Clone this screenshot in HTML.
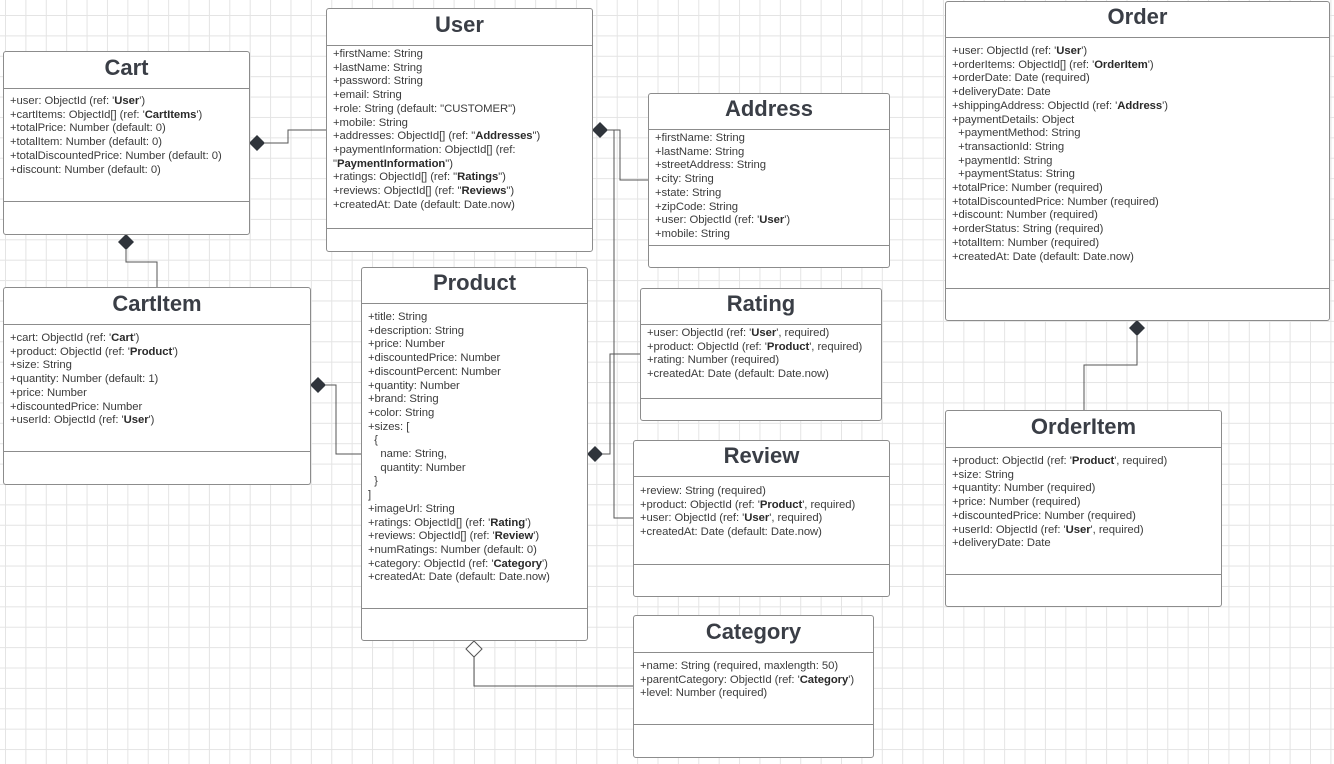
<!DOCTYPE html>
<html><head><meta charset="utf-8"><style>
html,body{margin:0;padding:0}
body{width:1334px;height:764px;position:relative;overflow:hidden;background-color:#fff;
background-image:linear-gradient(to right,#e4e4e4 1px,transparent 1px),linear-gradient(to bottom,#e4e4e4 1px,transparent 1px);
background-size:20.4px 20.4px;background-position:5px 15px;font-family:"Liberation Sans",sans-serif}
.b{position:absolute;background:#fff;border:1px solid #8c8c8c;border-radius:3px;box-sizing:border-box}
.t{position:absolute;left:0;right:0;top:0;border-bottom:1px solid #8c8c8c;text-align:center;font-weight:bold;font-size:22px;color:#3a3e46;box-sizing:border-box}
.c{position:absolute;left:6px;right:0;font-size:11.3px;line-height:13.7px;color:#3c3c3c;white-space:pre;letter-spacing:-0.05px}
.c b{color:#2a2a2a}
.l{position:absolute;left:0;right:0;border-top:1px solid #8c8c8c}
svg{position:absolute;left:0;top:0}
</style></head><body>
<svg width="1334" height="764">
<g fill="none" stroke="#555" stroke-width="1">
<path d="M265 143H288V130H326"/>
<path d="M126 250V262H157V287"/>
<path d="M326 385H336V454H361"/>
<path d="M474 657V686H633"/>
<path d="M1137 336V365H1084V410"/>
<path d="M608 130H620V180H648"/>
<path d="M608 130H614V518H633"/>
<path d="M603 454H610V354H640"/>
</g>
<g fill="#2f343b">
<path d="M249 143l8-8 8 8-8 8z"/>
<path d="M118 242l8-8 8 8-8 8z"/>
<path d="M310 385l8-8 8 8-8 8z"/>
<path d="M592 130l8-8 8 8-8 8z"/>
<path d="M587 454l8-8 8 8-8 8z"/>
<path d="M1129 328l8-8 8 8-8 8z"/>
</g>
<path d="M466 649l8-8 8 8-8 8z" fill="#fff" stroke="#555"/>
</svg>

<div class="b" style="left:3px;top:51px;width:247px;height:184px">
<div class="t" style="height:37px;line-height:31px">Cart</div>
<div class="c" style="top:43px">+user: ObjectId (ref: '<b>User</b>')
+cartItems: ObjectId[] (ref: '<b>CartItems</b>')
+totalPrice: Number (default: 0)
+totalItem: Number (default: 0)
+totalDiscountedPrice: Number (default: 0)
+discount: Number (default: 0)</div>
<div class="l" style="top:149px"></div></div>

<div class="b" style="left:326px;top:8px;width:267px;height:244px">
<div class="t" style="height:37px;line-height:31px">User</div>
<div class="c" style="top:39px">+firstName: String
+lastName: String
+password: String
+email: String
+role: String (default: "CUSTOMER")
+mobile: String
+addresses: ObjectId[] (ref: "<b>Addresses</b>")
+paymentInformation: ObjectId[] (ref:
"<b>PaymentInformation</b>")
+ratings: ObjectId[] (ref: "<b>Ratings</b>")
+reviews: ObjectId[] (ref: "<b>Reviews</b>")
+createdAt: Date (default: Date.now)</div>
<div class="l" style="top:219px"></div></div>

<div class="b" style="left:648px;top:93px;width:242px;height:175px">
<div class="t" style="height:36px;line-height:30px">Address</div>
<div class="c" style="top:38px">+firstName: String
+lastName: String
+streetAddress: String
+city: String
+state: String
+zipCode: String
+user: ObjectId (ref: '<b>User</b>')
+mobile: String</div>
<div class="l" style="top:151px"></div></div>

<div class="b" style="left:640px;top:288px;width:242px;height:133px">
<div class="t" style="height:36px;line-height:30px">Rating</div>
<div class="c" style="top:38px">+user: ObjectId (ref: '<b>User</b>', required)
+product: ObjectId (ref: '<b>Product</b>', required)
+rating: Number (required)
+createdAt: Date (default: Date.now)</div>
<div class="l" style="top:109px"></div></div>

<div class="b" style="left:633px;top:440px;width:257px;height:157px">
<div class="t" style="height:36px;line-height:30px">Review</div>
<div class="c" style="top:44px">+review: String (required)
+product: ObjectId (ref: '<b>Product</b>', required)
+user: ObjectId (ref: '<b>User</b>', required)
+createdAt: Date (default: Date.now)</div>
<div class="l" style="top:123px"></div></div>

<div class="b" style="left:633px;top:615px;width:241px;height:143px">
<div class="t" style="height:37px;line-height:31px">Category</div>
<div class="c" style="top:44px">+name: String (required, maxlength: 50)
+parentCategory: ObjectId (ref: '<b>Category</b>')
+level: Number (required)</div>
<div class="l" style="top:108px"></div></div>

<div class="b" style="left:361px;top:267px;width:227px;height:374px">
<div class="t" style="height:36px;line-height:30px">Product</div>
<div class="c" style="top:43px">+title: String
+description: String
+price: Number
+discountedPrice: Number
+discountPercent: Number
+quantity: Number
+brand: String
+color: String
+sizes: [
  {
    name: String,
    quantity: Number
  }
]
+imageUrl: String
+ratings: ObjectId[] (ref: '<b>Rating</b>')
+reviews: ObjectId[] (ref: '<b>Review</b>')
+numRatings: Number (default: 0)
+category: ObjectId (ref: '<b>Category</b>')
+createdAt: Date (default: Date.now)</div>
<div class="l" style="top:340px"></div></div>

<div class="b" style="left:3px;top:287px;width:308px;height:198px">
<div class="t" style="height:37px;line-height:31px">CartItem</div>
<div class="c" style="top:44px">+cart: ObjectId (ref: '<b>Cart</b>')
+product: ObjectId (ref: '<b>Product</b>')
+size: String
+quantity: Number (default: 1)
+price: Number
+discountedPrice: Number
+userId: ObjectId (ref: '<b>User</b>')</div>
<div class="l" style="top:163px"></div></div>

<div class="b" style="left:945px;top:1px;width:385px;height:320px">
<div class="t" style="height:36px;line-height:29px">Order</div>
<div class="c" style="top:43px">+user: ObjectId (ref: '<b>User</b>')
+orderItems: ObjectId[] (ref: '<b>OrderItem</b>')
+orderDate: Date (required)
+deliveryDate: Date
+shippingAddress: ObjectId (ref: '<b>Address</b>')
+paymentDetails: Object
  +paymentMethod: String
  +transactionId: String
  +paymentId: String
  +paymentStatus: String
+totalPrice: Number (required)
+totalDiscountedPrice: Number (required)
+discount: Number (required)
+orderStatus: String (required)
+totalItem: Number (required)
+createdAt: Date (default: Date.now)</div>
<div class="l" style="top:286px"></div></div>

<div class="b" style="left:945px;top:410px;width:277px;height:197px">
<div class="t" style="height:37px;line-height:31px">OrderItem</div>
<div class="c" style="top:44px">+product: ObjectId (ref: '<b>Product</b>', required)
+size: String
+quantity: Number (required)
+price: Number (required)
+discountedPrice: Number (required)
+userId: ObjectId (ref: '<b>User</b>', required)
+deliveryDate: Date</div>
<div class="l" style="top:163px"></div></div>
</body></html>
